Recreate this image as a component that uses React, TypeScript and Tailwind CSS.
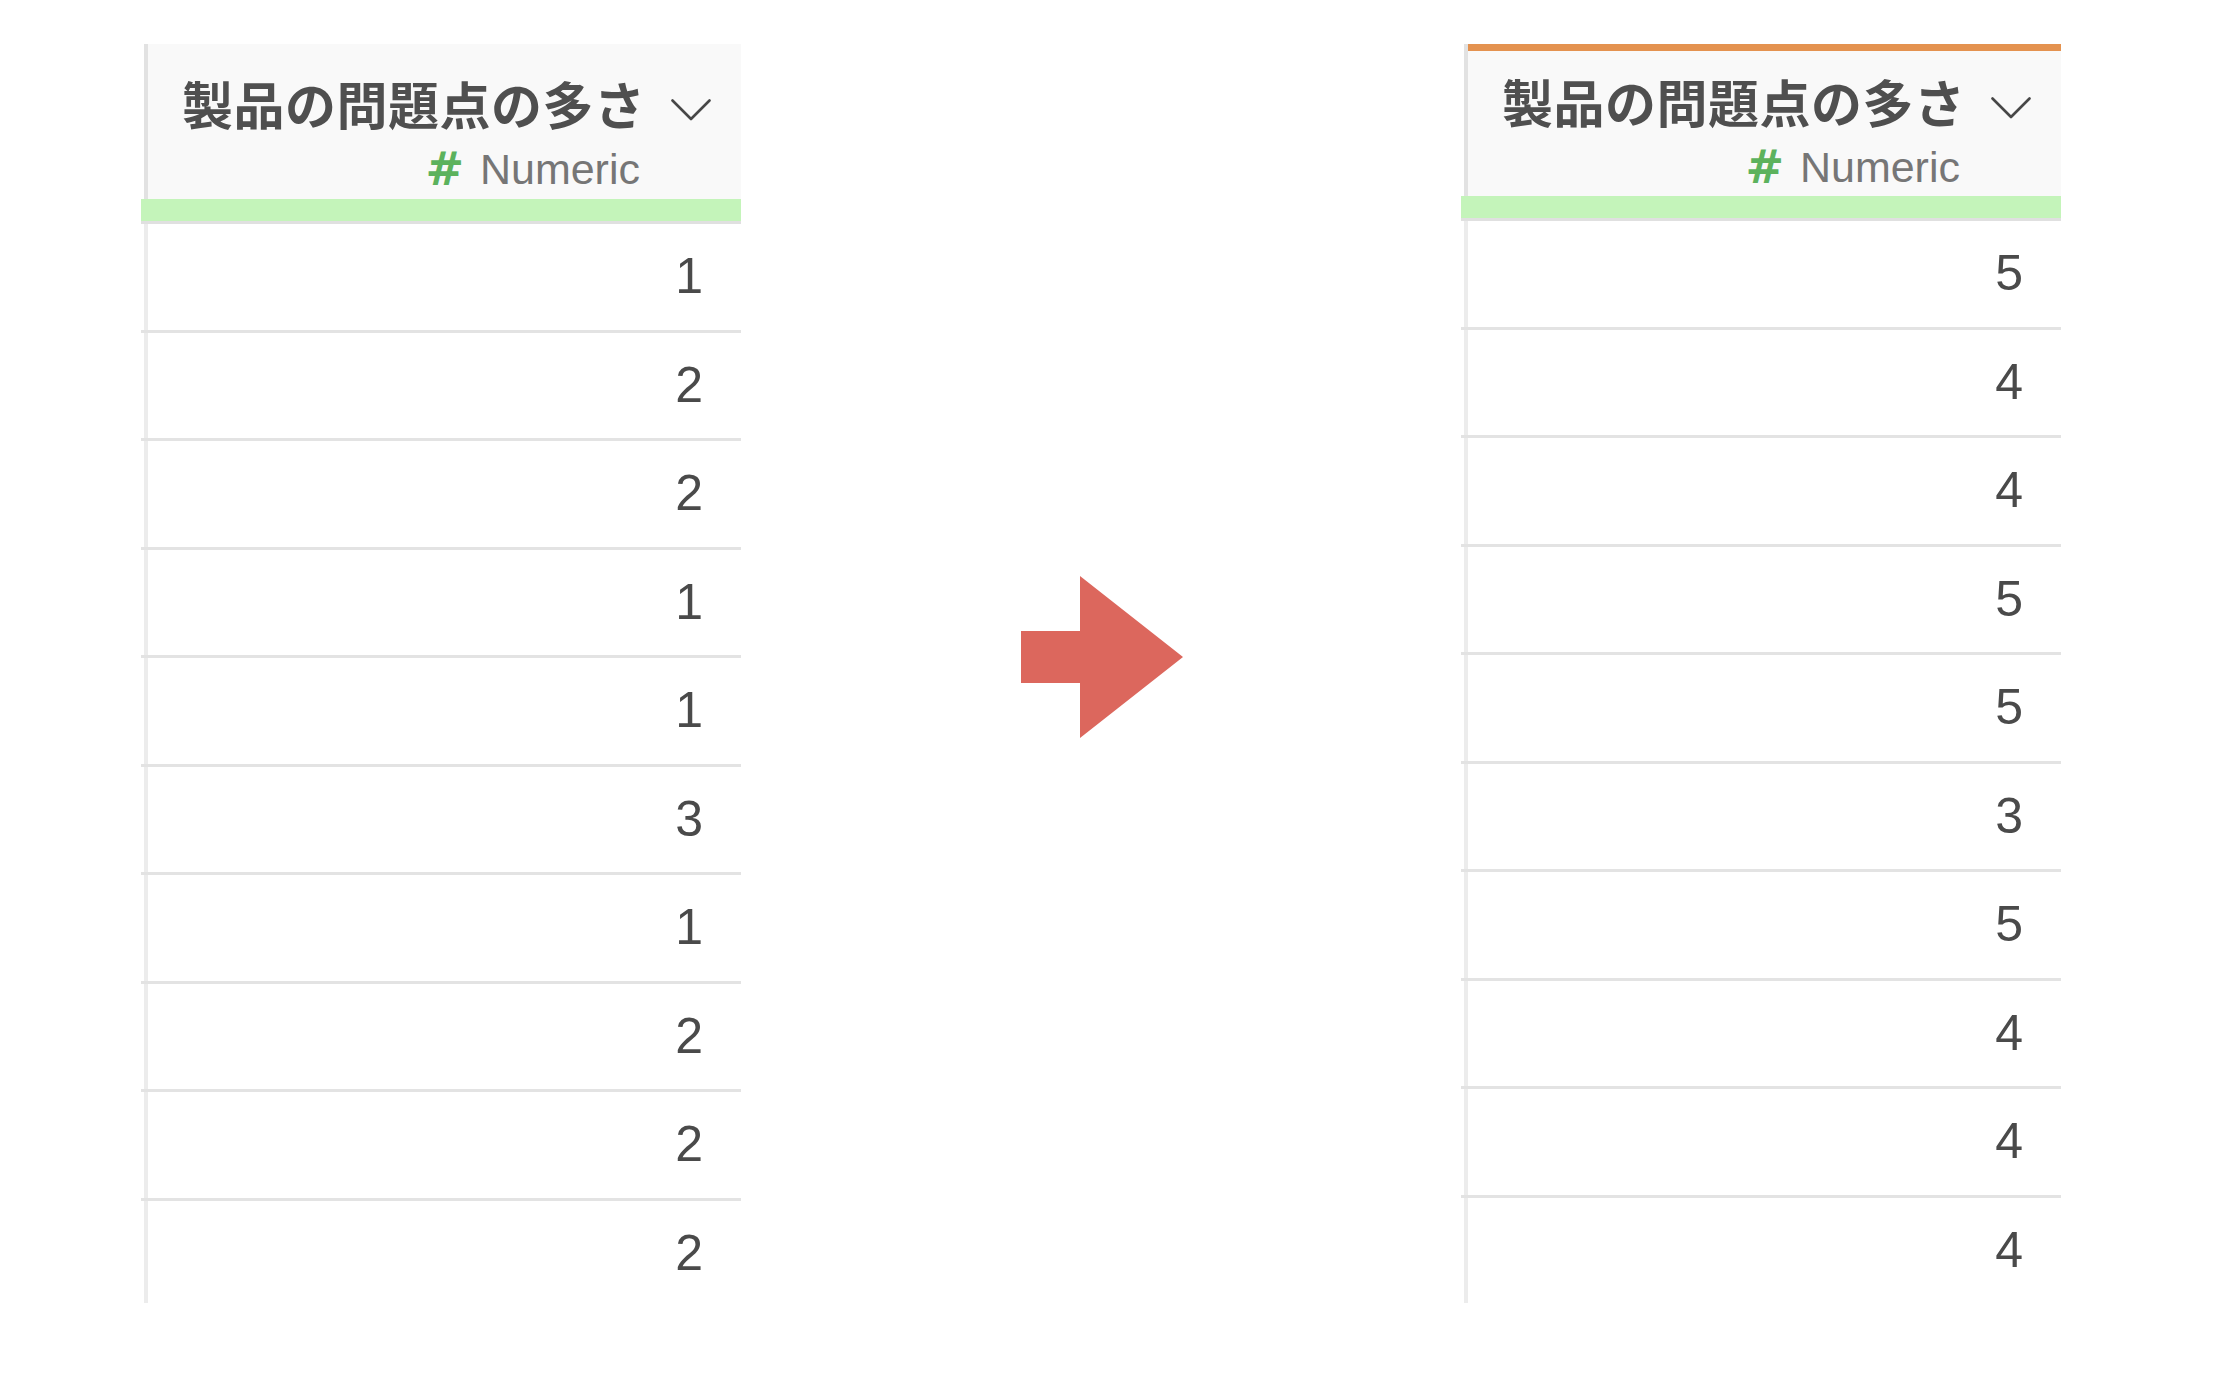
import React from "react";

const LEFT = [1, 2, 2, 1, 1, 3, 1, 2, 2, 2];
const RIGHT = [5, 4, 4, 5, 5, 3, 5, 4, 4, 4];

function Chevron() {
  return (
    <svg width="40" height="22" viewBox="0 0 40 22" className="shrink-0 mt-[14px]">
      <polyline points="1.5,1.5 20,20 38.5,1.5" fill="none" stroke="#474747" strokeWidth="2.6" strokeLinecap="round" strokeLinejoin="round" />
    </svg>
  );
}

function Header({ orange }: { orange: boolean }) {
  return (
    <div className="ml-[3px] border-l-[4px] border-[#e2e2e2] bg-[#f9f9f9] flex flex-col">
      {orange && <div className="h-[7px] bg-[#e4924f]" />}
      <div className={orange ? "pt-[17px] pb-[4px]" : "pt-[26px] pb-[5px]"}>
        <div className="flex items-center justify-between pl-[34px] pr-[30px]">
          <span
            className="text-[51px] leading-[66px] font-bold text-[#4f4f4f] whitespace-nowrap tracking-[0.5px]"
            style={{ fontFamily: '"Noto Sans CJK JP", "Noto Sans", sans-serif' }}
          >
            製品の問題点の多さ
          </span>
          <Chevron />
        </div>
        <div className="flex items-center justify-end pr-[101px] mt-[8px] h-[50px]">
          <span
            className="text-[46px] leading-[50px] font-bold text-[#5cb25d]"
            style={{ fontFamily: '"DejaVu Sans", sans-serif' }}
          >
            #
          </span>
          <span
            className="ml-[16px] text-[43px] leading-[50px] text-[#767676]"
            style={{ fontFamily: '"Liberation Sans", Arial, sans-serif' }}
          >
            Numeric
          </span>
        </div>
      </div>
    </div>
  );
}

function Column({ values, orange }: { values: number[]; orange: boolean }) {
  return (
    <div className="w-[600px] h-[1259px] overflow-hidden flex flex-col shrink-0">
      <Header orange={orange} />
      <div className="h-[22px] bg-[#c4f4ba] shrink-0" />
      <div className="h-[3px] bg-[#e0e0e0] shrink-0" />
      {values.map((v, i) => (
        <div key={i} className="border-b-[3px] border-[#e3e3e3] shrink-0">
          <div
            className="ml-[3px] border-l-[4px] border-[#ececec] h-[105.5px] flex items-center justify-end pr-[38px] text-[50px] text-[#4a4a4a]"
            style={{ fontFamily: '"Liberation Sans", Arial, sans-serif' }}
          >
            {v}
          </div>
        </div>
      ))}
    </div>
  );
}

function Arrow() {
  return (
    <svg width="162" height="162" viewBox="0 0 162 162" className="shrink-0 mt-[532px]">
      <polygon points="0,55 59,55 59,0 162,81 59,162 59,107 0,107" fill="#dc675d" />
    </svg>
  );
}

export default function App() {
  return (
    <div className="w-[2238px] h-[1382px] bg-white flex items-start pt-[44px] pl-[141px]">
      <Column values={LEFT} orange={false} />
      <div className="ml-[280px]">
        <Arrow />
      </div>
      <div className="ml-[278px]">
        <Column values={RIGHT} orange={true} />
      </div>
    </div>
  );
}
